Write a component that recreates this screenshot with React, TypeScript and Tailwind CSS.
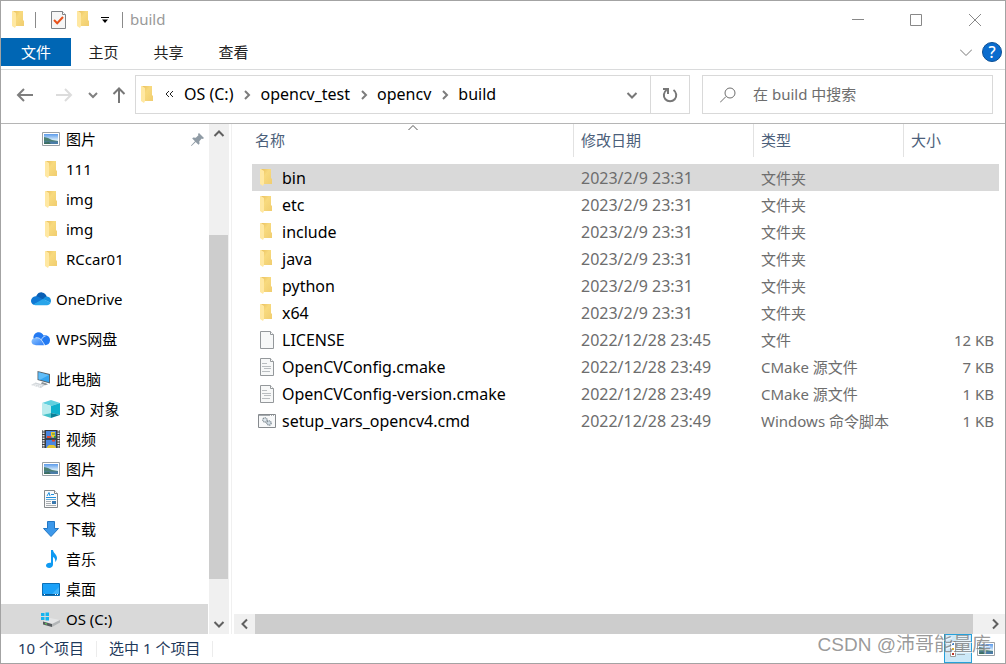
import { useState, type ReactNode } from "react";
import clsx from "clsx";

/* ---------- icons ---------- */

const FolderIcon = () => (
  <svg width="12" height="17" viewBox="0 0 12 17" className="shrink-0" aria-hidden="true">
    <defs>
      <linearGradient id="folderBack" x1="0" y1="0" x2="1" y2="1">
        <stop offset="0" stopColor="#e9bf5c" />
        <stop offset="0.4" stopColor="#f8da7e" />
        <stop offset="1" stopColor="#f0cd70" />
      </linearGradient>
    </defs>
    <path d="M1 0h10v9l1 1v5H3z" fill="url(#folderBack)" />
    <path d="M0 0h1l3 2v13l-1 2-3-2z" fill="#ffe8a2" />
  </svg>
);

const PageIcon = ({ lines = false }: { lines?: boolean }) => (
  <svg width="15" height="18" viewBox="0 0 15 18" className="shrink-0" aria-hidden="true">
    <path d="M.5.5h10l3 3v14H.5z" fill="#f7f8f8" stroke="#94989b" />
    <path d="M10.500.5v3h3" fill="#fff" stroke="#94989b" />
    {lines && <path d="M2 5.500h5M2 8.500h9M4 10.500h7M2 13.500h8" stroke="#b9bdc0" />}
  </svg>
);

const CmdIcon = () => (
  <svg width="18" height="14" viewBox="0 0 18 14" className="shrink-0" aria-hidden="true">
    <path d="M.5.5h17v13H.5z" fill="#f7f8f9" stroke="#868a8e" />
    <path d="M1 1.500h16" stroke="#a6abaf" />
    <path d="M12 1.500h1M14 1.500h1M16 1.500h1" stroke="#fff" />
    <circle cx="7" cy="6" r="2.200" fill="#dfe7ed" stroke="#7f8a92" strokeWidth="1.300" strokeDasharray="1.200 .6" />
    <circle cx="11" cy="9" r="2.200" fill="#cfdbe4" stroke="#7f8a92" strokeWidth="1.300" strokeDasharray="1.200 .6" />
  </svg>
);

const CheckPageIcon = () => (
  <svg width="15" height="18" viewBox="0 0 15 18" aria-hidden="true">
    <path d="M.5.500h11l3 3v14H.5z" fill="#f6f6f6" stroke="#808488" />
    <path d="M11.500.5v3h3" fill="#fff" stroke="#808488" />
    <path d="M3 9l3.200 3.300L12 6" fill="none" stroke="#e8521c" strokeWidth="2" />
  </svg>
);

const PictureIcon = () => (
  <svg width="18" height="14" viewBox="0 0 18 14" className="shrink-0" aria-hidden="true">
    <defs>
      <linearGradient id="sky" x1="0" y1="0" x2="0" y2="1">
        <stop offset="0" stopColor="#5b9bea" />
        <stop offset="0.6" stopColor="#d6ecfa" />
        <stop offset="1" stopColor="#eaf6fc" />
      </linearGradient>
    </defs>
    <path d="M.5.5h17v13H.5z" fill="#fff" stroke="#9aa0a5" />
    <path d="M2 2h14v10H2z" fill="url(#sky)" />
    <path d="M2 5l4 1 4 2 6 1v1H2z" fill="#4b7f72" />
    <path d="M2 9.500h14V12H2z" fill="#4a7ca8" />
    <path d="M2 10.500l5-.5 2 2H2z" fill="#3d6e5e" />
  </svg>
);

const OneDriveIcon = () => (
  <svg width="20" height="14" viewBox="0 0 20 14" className="shrink-0" aria-hidden="true">
    <path d="M5 4.500C6.500 1 9 .2 11 .4c2.500.3 4.200 2 4.800 4.200L12 9z" fill="#0a5fb4" />
    <path d="M4.500 4.200c2 0 3 .6 4.200 1.400L13 8 2.500 12.700C.8 12 0 10.500 0 8.800c0-2.400 2-4.500 4.500-4.600z" fill="#0f78d4" />
    <path d="M12 7.200c1.300-1.800 2.500-2.600 4-2.600 2.300.2 4 2 4 4.300l-.4 1.800z" fill="#1690de" />
    <path d="M2.300 12.500L12 7l7.700 3.800c-.8 1.500-2 2.400-3.700 2.400H4.500c-.8 0-1.500-.2-2.200-.7z" fill="#28a5ea" />
  </svg>
);

const WpsIcon = () => (
  <svg width="20" height="14" viewBox="0 0 20 14" className="shrink-0" aria-hidden="true">
    <defs>
      <linearGradient id="wps" x1="0" y1="0" x2="1" y2="1">
        <stop offset="0" stopColor="#8fc6ff" />
        <stop offset="1" stopColor="#2b7cf6" />
      </linearGradient>
    </defs>
    <path d="M2.500 6.500C2 3 4.500.3 7.800.3c2.200 0 4 1.300 4.800 3.200 3.600-.9 6.600 1.500 6.400 5-.1 2.800-2.200 4.700-5 4.700z" fill="#237af2" />
    <path d="M4.700 5.800c2.500-.4 4.800 1 6.100 3.300l2.300 4.100H5c-2.500 0-4.500-1.400-4.500-3.600 0-2 1.700-3.600 4.200-3.800z" fill="url(#wps)" />
    <path d="M4.500 5.800c3-.6 5 .8 6.600 3.200l2.700 4.200M10.500 7.800c.8-2.400 2-3.400 4-3.700" fill="none" stroke="#e8f3ff" strokeWidth=".8" />
  </svg>
);

const ComputerIcon = () => (
  <svg width="20" height="17" viewBox="0 0 20 17" className="shrink-0" aria-hidden="true">
    <path d="M6.500 0L19 3v9.500L6.500 9z" fill="#5d666d" />
    <path d="M7.500 1.300L18 3.900v7.300L7.500 8.300z" fill="#34a4f0" />
    <path d="M7.500 1.300L18 3.900 9 8.700l-1.500-.4z" fill="#61bdf8" />
    <path d="M11 11l4 1.200 2 1.300-3 .8-4-1.500z" fill="#8c949a" />
    <path d="M0 14l4.500-2.500L14 14l-4 3z" fill="#cfd4d8" />
    <path d="M1.500 14l8 2M3.300 13l8 2" stroke="#f6f7f8" strokeDasharray="1.500 .6" />
  </svg>
);

const CubeIcon = () => (
  <svg width="18" height="18" viewBox="0 0 18 18" className="shrink-0" aria-hidden="true">
    <path d="M9 0l9 3-9 3-9-3z" fill="#5fd0de" />
    <path d="M0 3l9 3v7l-9 2z" fill="#b9ecee" />
    <path d="M18 3L9 6v7l9 2z" fill="#0db0cc" />
    <path d="M0 15l9-2v5z" fill="#45c2c9" />
    <path d="M18 15l-9-2v5z" fill="#087f97" />
  </svg>
);

const VideoIcon = () => (
  <svg width="18" height="18" viewBox="0 0 18 18" className="shrink-0" aria-hidden="true">
    <path d="M0 0h18v18H0z" fill="#3b3d40" />
    <path d="M1.500 0v18M16.500 0v18" stroke="#e3e5e7" strokeWidth="2" strokeDasharray="1.500 1" />
    <path d="M4 1h10v7.500H4zM4 9.500h10V18H4z" fill="#4a86e0" />
    <path d="M9 2h4v4l-2 2-2-2z" fill="#f0ca2c" />
    <path d="M5 6h4v2H5zM10 9.500h3v2h-3z" fill="#de4830" />
    <path d="M10 3.500h3v1h-3zM12 6h2v2h-2z" fill="#3b9848" />
    <path d="M5 17l2-2h5l2 2v1H5z" fill="#e4c532" />
    <path d="M4 9h10" stroke="#23262b" />
  </svg>
);

const DocumentIcon = () => (
  <svg width="14" height="18" viewBox="0 0 14 18" className="shrink-0" aria-hidden="true">
    <path d="M.5.5h10l3 3v14H.5z" fill="#fafafa" stroke="#84898d" />
    <path d="M10.500.5v3h3" fill="#fff" stroke="#84898d" />
    <path d="M3 6l2-3.500L6 6M7 4.500h3M2 7.500h10" fill="none" stroke="#1d8fe0" />
    <path d="M2 9.500h10" stroke="#60a9da" />
    <path d="M2 11.500h5M2 13.500h5M2 15.500h10" stroke="#a8adb1" />
    <path d="M8 11h4v3H8z" fill="#3a78ae" />
  </svg>
);

const DownloadIcon = () => (
  <svg width="16" height="16" viewBox="0 0 16 16" className="shrink-0" aria-hidden="true">
    <path d="M4.500.5h7v7h4L8 15.500.5 7.500h4z" fill="#3c98ea" stroke="#2277c4" />
  </svg>
);

const MusicIcon = () => (
  <svg width="11" height="18" viewBox="0 0 11 18" className="shrink-0" aria-hidden="true">
    <path d="M5 0h2c.2 3 4 4.500 4 8 0 1.800-.8 3-1.800 4 .4-2.500-.4-4-2.200-5v7.500C7 16.600 5.200 18 3.200 18 1.400 18 0 17 0 15.500 0 13.700 2 12.300 5 12.700z" fill="#0f9af2" />
  </svg>
);

const DesktopIcon = () => (
  <svg width="18" height="13" viewBox="0 0 18 13" className="shrink-0" aria-hidden="true">
    <path d="M.5.5h17v12H.5z" fill="#1ba1f8" stroke="#0b70b8" />
    <path d="M10 11l7-7v7z" fill="#40b4fb" />
    <path d="M1 11.500h16" stroke="#085a96" />
    <path d="M2 11.500h1M13 11.500h1M15 11.500h1" stroke="#fff" />
  </svg>
);

const DriveIcon = () => (
  <svg width="20" height="15" viewBox="0 0 20 15" className="shrink-0" aria-hidden="true">
    <path d="M2 9.500L9 6l10 2-8 4z" fill="#e4e5e6" />
    <path d="M2 9.500l9 2.500v3l-9-2.500z" fill="#565b5e" />
    <path d="M11 12l8-4v2.500L11 15z" fill="#b2b5b7" />
    <path d="M4 11.500l2 .6" stroke="#5ddb57" />
    <path d="M0 1h3.500v3H0zM4.500.5H8V4H4.500zM0 5h3.500v3H0zM4.500 5H8v3.500H4.500z" fill="#14b4f0" />
  </svg>
);

const PinIcon = () => (
  <svg width="13" height="13" viewBox="0 0 13 13" aria-hidden="true">
    <path d="M8 0l5 5-1.200 1-1-.4-2.500 2.600.2 2.600-1 1-2.800-2.800L.5 13 0 12.500 4 8.300 1.200 5.500l1-1 2.600.2L7.400 2.200 7 1.100z" fill="#8f9ba5" />
  </svg>
);

type StrokeProps = { d: string; size?: number; width?: number; className?: string };

const Stroke = ({ d, size = 12, width = 2, className = "text-[#606060]" }: StrokeProps) => (
  <svg
    width={size}
    height={size}
    viewBox={`0 0 ${size} ${size}`}
    fill="none"
    stroke="currentColor"
    strokeWidth={width}
    className={clsx("shrink-0", className)}
    aria-hidden="true"
  >
    <path d={d} />
  </svg>
);

const DOWN = "M1.500 4L6 8.500 10.500 4";
const UP = "M1.500 8L6 3.500 10.500 8";
const LEFT = "M8 1.500L3.500 6 8 10.500";
const RIGHT = "M4 1.500L8.500 6 4 10.500";

/* ---------- data ---------- */

type NavItem = { label: string; icon: ReactNode; root?: boolean; pinned?: boolean };

const navGroups: NavItem[][] = [
  [
    { label: "图片", icon: <PictureIcon />, pinned: true },
    { label: "111", icon: <FolderIcon /> },
    { label: "img", icon: <FolderIcon /> },
    { label: "img", icon: <FolderIcon /> },
    { label: "RCcar01", icon: <FolderIcon /> },
  ],
  [{ label: "OneDrive", icon: <OneDriveIcon />, root: true }],
  [{ label: "WPS网盘", icon: <WpsIcon />, root: true }],
  [
    { label: "此电脑", icon: <ComputerIcon />, root: true },
    { label: "3D 对象", icon: <CubeIcon /> },
    { label: "视频", icon: <VideoIcon /> },
    { label: "图片", icon: <PictureIcon /> },
    { label: "文档", icon: <DocumentIcon /> },
    { label: "下载", icon: <DownloadIcon /> },
    { label: "音乐", icon: <MusicIcon /> },
    { label: "桌面", icon: <DesktopIcon /> },
    { label: "OS (C:)", icon: <DriveIcon /> },
  ],
];

const files = [
  { name: "bin", date: "2023/2/9 23:31", type: "文件夹", size: "", icon: <FolderIcon /> },
  { name: "etc", date: "2023/2/9 23:31", type: "文件夹", size: "", icon: <FolderIcon /> },
  { name: "include", date: "2023/2/9 23:31", type: "文件夹", size: "", icon: <FolderIcon /> },
  { name: "java", date: "2023/2/9 23:31", type: "文件夹", size: "", icon: <FolderIcon /> },
  { name: "python", date: "2023/2/9 23:31", type: "文件夹", size: "", icon: <FolderIcon /> },
  { name: "x64", date: "2023/2/9 23:31", type: "文件夹", size: "", icon: <FolderIcon /> },
  { name: "LICENSE", date: "2022/12/28 23:45", type: "文件", size: "12 KB", icon: <PageIcon /> },
  { name: "OpenCVConfig.cmake", date: "2022/12/28 23:49", type: "CMake 源文件", size: "7 KB", icon: <PageIcon lines /> },
  { name: "OpenCVConfig-version.cmake", date: "2022/12/28 23:49", type: "CMake 源文件", size: "1 KB", icon: <PageIcon lines /> },
  { name: "setup_vars_opencv4.cmd", date: "2022/12/28 23:49", type: "Windows 命令脚本", size: "1 KB", icon: <CmdIcon /> },
];

const crumbs = ["OS (C:)", "opencv_test", "opencv", "build"];

/* ---------- sections ---------- */

const TitleBar = () => (
  <header className="flex h-[37px] shrink-0 items-center">
    <div className="flex items-center pl-[11px]">
      <FolderIcon />
      <span className="ml-[11px] h-4 w-px bg-[#8a8a8a]" />
      <button aria-label="属性" className="ml-[15px]">
        <CheckPageIcon />
      </button>
      <button aria-label="新建文件夹" className="ml-[11px]">
        <FolderIcon />
      </button>
      <button aria-label="自定义快速访问工具栏" className="ml-3">
        <svg width="8" height="6" viewBox="0 0 8 6">
          <path d="M0 .5h8" stroke="#000" />
          <path d="M1 2.500h6L4 6z" fill="#000" />
        </svg>
      </button>
      <span className="ml-[13px] h-4 w-px bg-[#8a8a8a]" />
    </div>
    <h1 className="ml-[7px] flex-1 pb-0.5 text-[#999]">build</h1>
    <button aria-label="最小化" className="flex h-full w-[58px] items-center justify-center">
      <Stroke d="M0 5.500h12" width={1} className="text-[#888]" />
    </button>
    <button aria-label="最大化" className="flex h-full w-[58px] items-center justify-center">
      <Stroke d="M.5.5h11v11H.5z" width={1} className="text-[#888]" />
    </button>
    <button aria-label="关闭" className="flex h-full w-[60px] items-center justify-center">
      <Stroke d="M0 0l12 12M12 0L0 12" width={1} className="text-[#888]" />
    </button>
  </header>
);

const Ribbon = () => (
  <nav className="flex h-8 shrink-0 items-start border-b border-[#dadbdc]">
    <button className="h-7 w-[70px] bg-[#0066b4] text-white">文件</button>
    {["主页", "共享", "查看"].map((tab) => (
      <button key={tab} className="h-7 w-[65px] text-[#222]">
        {tab}
      </button>
    ))}
    <div className="ml-auto flex h-7 items-center gap-2.5 pr-[3px]">
      <button aria-label="展开功能区">
        <Stroke d="M0 3.500l6 6 6-6" width={1} className="text-[#777]" />
      </button>
      <button
        aria-label="帮助"
        className="h-5 w-5 rounded-full border border-[#0c4f94] bg-[#0a6cce] text-base leading-[18px] font-medium text-white"
      >
        ?
      </button>
    </div>
  </nav>
);

const AddressRow = () => {
  const [query, setQuery] = useState("");

  return (
    <div className="flex h-[54px] shrink-0 items-start border-b border-[#b5b5b5] pt-[5px] pr-3 pl-[15px]">
      <div className="flex h-[39px] w-[119px] items-center">
        <button aria-label="后退">
          <Stroke size={18} d="M17 9H2M8 3L2 9l6 6" className="text-[#7e7e7e]" />
        </button>
        <button aria-label="前进" className="ml-[21px]">
          <Stroke size={18} d="M1 9h14.500M10 3l6 6-6 6" className="text-[#dcdcdc]" />
        </button>
        <button aria-label="最近浏览的位置" className="ml-[15px]">
          <Stroke size={10} d="M1 3l4 4 4-4" className="text-[#808080]" />
        </button>
        <button aria-label="上移" className="ml-3">
          <Stroke size={18} d="M9 17V2M3.500 8L9 2.500 14.500 8" className="text-[#777]" />
        </button>
      </div>

      <div className="flex h-[39px] flex-1 border border-[#d9d9d9] text-base">
        <div className="flex flex-1 items-center pl-[5px]">
          <FolderIcon />
          <Stroke size={9} d="M4 1L1 4l3 3M8 1L5 4l3 3" width={1} className="mr-2.5 ml-3 text-[#222]" />
          {crumbs.map((crumb, i) => (
            <div key={crumb} className="flex items-center">
              {i > 0 && <Stroke size={10} d="M3 1l4 4-4 4" className="mr-2 ml-[9px] text-[#7c7c7c]" />}
              <button className="pb-0.5 leading-5">{crumb}</button>
            </div>
          ))}
          <button aria-label="以前的位置" className="mr-3 ml-auto">
            <Stroke d={DOWN} className="text-[#777]" />
          </button>
        </div>
        <button
          aria-label="刷新"
          className="flex w-[39px] items-center justify-center border-l border-[#d9d9d9] text-[#777]"
        >
          <svg width="16" height="16" viewBox="0 0 16 16" fill="none" stroke="currentColor" strokeWidth="2">
            <path d="M11.500 3A6.200 6.200 0 1 1 4.600 3" />
            <path d="M1 2h5v5" />
          </svg>
        </button>
      </div>

      <label className="ml-3 flex h-[39px] w-[291px] items-center border border-[#d9d9d9] pl-[17px]">
        <Stroke size={16} width={1} d="M0 15.500l6-6M15 6A5 5 0 1 1 5 6a5 5 0 0 1 10 0z" className="text-[#6d6d6d]" />
        <input
          aria-label="搜索"
          value={query}
          onChange={(e) => setQuery(e.target.value)}
          placeholder="在 build 中搜索"
          className="ml-[17px] w-full min-w-0 bg-transparent pb-0.5 outline-none placeholder:text-[#6d6d6d]"
        />
      </label>
    </div>
  );
};

const Sidebar = () => (
  <aside className="flex w-[231px] shrink-0 border-r border-[#f0f0f0]">
    <div className="flex w-[207px] flex-col gap-2.5 overflow-hidden">
      {navGroups.map((group, g) => (
        <ul key={g}>
          {group.map(({ label, icon, root, pinned }, i) => (
            <li key={i}>
              <button
                className={clsx(
                  "flex h-[30px] w-full items-center",
                  root ? "pl-[30px]" : "pl-[41px]",
                  label === "OS (C:)" && "bg-[#d9d9d9]"
                )}
              >
                <span className={clsx("flex shrink-0", root ? "w-[25px]" : "w-6")}>
                  <span className={clsx("flex justify-center", root ? "w-5" : "w-[18px]")}>{icon}</span>
                </span>
                {label}
                {pinned && (
                  <span className="mr-1 ml-auto">
                    <PinIcon />
                  </span>
                )}
              </button>
            </li>
          ))}
        </ul>
      ))}
    </div>
    <div className="ml-px flex w-5 flex-col items-center bg-[#f0f0f0]">
      <button aria-label="向上滚动" className="flex h-5 items-center">
        <Stroke d={UP} />
      </button>
      <div className="flex w-full flex-1 flex-col pr-px">
        <div className="flex-[91]" />
        <div className="flex-[344] bg-[#cdcdcd]" />
        <div className="flex-[35]" />
      </div>
      <button aria-label="向下滚动" className="flex h-5 items-center">
        <Stroke d={DOWN} />
      </button>
    </div>
  </aside>
);

const FileList = () => {
  const [selected, setSelected] = useState("bin");

  return (
    <main className="flex min-w-0 flex-1 flex-col">
      <div className="min-h-0 flex-1 overflow-hidden pr-1.5 pl-5">
        <table className="w-full table-fixed text-left text-[#6d6d6d]">
          <colgroup>
            <col />
            <col className="w-[180px]" />
            <col className="w-[150px]" />
            <col className="w-24" />
          </colgroup>
          <thead className="text-[#4c607a]">
            <tr>
              <th className="relative pb-[7px] font-normal">
                <div className="flex h-[33px] items-center pb-0.5 pl-[3px]">名称</div>
                <span className="absolute inset-x-0 top-0 flex justify-center">
                  <Stroke size={10} d="M.5 6L5 1.500 9.500 6" width={1} className="text-[#555]" />
                </span>
              </th>
              {["修改日期", "类型", "大小"].map((title) => (
                <th key={title} className="pb-[7px] font-normal">
                  <div className="flex h-[33px] items-center border-l border-[#e2e2e2] pb-0.5 pl-[7px]">{title}</div>
                </th>
              ))}
            </tr>
          </thead>
          <tbody>
            {files.map((file) => (
              <tr
                key={file.name}
                onClick={() => setSelected(file.name)}
                className={clsx("h-[27px]", selected === file.name && "bg-[#d9d9d9]")}
              >
                <td className="p-0 text-base leading-5 text-black">
                  <div className="flex items-center pl-[5px]">
                    <span className="flex w-[25px] shrink-0 justify-start pl-[3px]">
                      <span className={clsx("flex", file.name.endsWith(".cmd") && "-ml-[2px]")}>{file.icon}</span>
                    </span>
                    <span className="whitespace-nowrap">{file.name}</span>
                  </div>
                </td>
                <td className="p-0 pl-2 text-base leading-5 whitespace-nowrap">{file.date}</td>
                <td className="p-0 pl-2 whitespace-nowrap">{file.type}</td>
                <td className="p-0 pr-[5px] text-right whitespace-nowrap">{file.size}</td>
              </tr>
            ))}
          </tbody>
        </table>
      </div>
      <div className="ml-0.5 flex h-5 shrink-0 items-stretch bg-[#f0f0f0]">
        <button aria-label="向左滚动" className="flex w-[21px] items-center justify-center">
          <Stroke d={LEFT} />
        </button>
        <div className="flex-1 bg-[#cdcdcd]" />
        <button aria-label="向右滚动" className="flex w-8 items-center justify-end pr-1">
          <Stroke d={RIGHT} />
        </button>
      </div>
    </main>
  );
};

const StatusBar = () => (
  <footer className="relative flex h-[29px] shrink-0 items-center text-[#1e395b]">
    <span className="pb-0.5 pl-[17px]">10 个项目</span>
    <span className="ml-3 h-4 w-px bg-[#ececec]" />
    <span className="pb-0.5 pl-3">选中 1 个项目</span>
    <span className="ml-3 h-4 w-px bg-[#ececec]" />
    <button
      aria-label="详细信息"
      className="ml-auto flex h-full w-7 items-center justify-center border border-[#26a0da] bg-[#cce8f7]"
    >
      <svg width="16" height="16" viewBox="0 0 16 16">
        <path d="M.5.5h5v15h-5z" fill="#fff" stroke="#9a9a9a" />
        <path d="M2 2h2v2H2z" fill="#3f87c8" />
        <path d="M2 7h2v2H2z" fill="#e0ae30" />
        <path d="M2 12h2v2H2z" fill="#b83228" />
        <path d="M7 3.500h8M7 8.500h8M7 13.500h8" stroke="#9aa6ad" />
      </svg>
    </button>
    <button aria-label="大缩略图" className="mr-2.5 ml-[5px]">
      <PictureIcon />
    </button>
    <span className="pointer-events-none absolute right-3.5 bottom-1.5 font-['Liberation_Sans','Noto_Sans_CJK_SC',sans-serif] text-[19px] leading-6 whitespace-nowrap text-[#808080]/80 [text-shadow:1px_1px_0_#ffffffb0]">
      CSDN @沛哥能量库
    </span>
  </footer>
);

const App = () => (
  <div className="flex h-screen flex-col overflow-hidden border border-[#a3a3a3] bg-white font-['Noto_Sans','Noto_Sans_CJK_SC',sans-serif] text-[15px] leading-5 text-black">
    <TitleBar />
    <Ribbon />
    <AddressRow />
    <div className="flex min-h-0 flex-1">
      <Sidebar />
      <FileList />
    </div>
    <StatusBar />
  </div>
);

export default App;
